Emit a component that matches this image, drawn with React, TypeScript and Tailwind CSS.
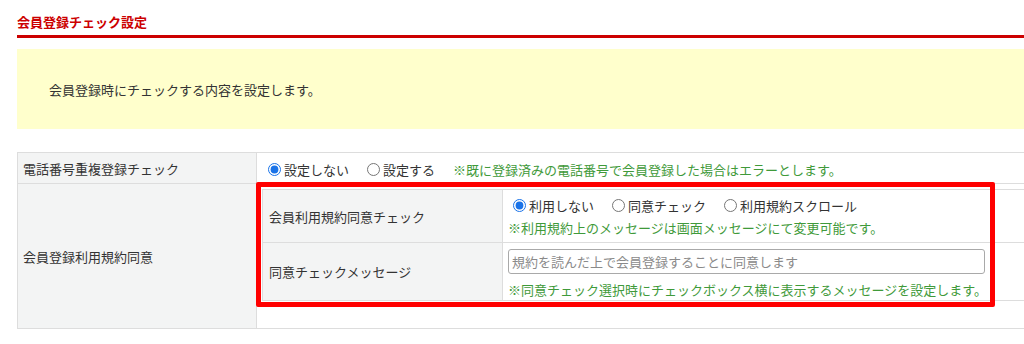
import React from 'react';

const Radio: React.FC<{ name: string; label: string; checked?: boolean }> = ({ name, label, checked }) => (
  <label className="flex items-center mr-[13px]">
    <input type="radio" name={name} defaultChecked={checked} className="ml-[5px] mr-[3px] w-[13px] h-[13px] accent-[#1a73e8]" />
    <span>{label}</span>
  </label>
);

const Note: React.FC<{ children: React.ReactNode }> = ({ children }) => (
  <p className="text-[#3f9a3a]">{children}</p>
);

export default function App() {
  return (
    <div className="w-[1024px] h-[344px] overflow-hidden bg-white text-[13px] leading-[19px] text-[#333] font-['Noto_Sans_CJK_JP',sans-serif]">
      <div className="relative w-[1120px] pl-[17px]">
        {/* Title */}
        <div className="pt-[12px] pb-[4px] border-b-[3px] border-[#cc0000]">
          <h2 className="font-bold text-[#cc0000]">会員登録チェック設定</h2>
        </div>

        {/* Description */}
        <div className="mt-[11px] h-[80px] bg-[#ffffcc] flex items-center pl-[32px]">
          <p>会員登録時にチェックする内容を設定します。</p>
        </div>

        {/* Settings table */}
        <div className="mt-[23px] border-t border-l border-[#dddddd]">
          <div className="flex h-[31px] border-b border-[#dddddd]">
            <div className="w-[239px] shrink-0 bg-[#f3f4f4] border-r border-[#dddddd] pl-[5px] flex items-center">
              電話番号重複登録チェック
            </div>
            <div className="flex-1 flex items-center pl-[6px] pt-[2px]">
              <Radio name="tel" label="設定しない" checked />
              <Radio name="tel" label="設定する" />
              <span className="ml-[5px] text-[#3f9a3a]">※既に登録済みの電話番号で会員登録した場合はエラーとします。</span>
            </div>
          </div>

          <div className="flex h-[145px] border-b border-[#dddddd]">
            <div className="w-[239px] shrink-0 bg-[#f3f4f4] border-r border-[#dddddd] pl-[5px] flex items-center">
              会員登録利用規約同意
            </div>
            <div className="flex-1 pt-[5px] pl-[5px]">
              <div className="border-t border-l border-[#dddddd]">
                <div className="flex h-[53px] border-b border-[#dddddd]">
                  <div className="w-[240px] shrink-0 bg-[#f3f4f4] border-r border-[#dddddd] pl-[6px] flex items-center">
                    会員利用規約同意チェック
                  </div>
                  <div className="flex-1 pl-[5px] pt-[6px]">
                    <div className="flex items-center mb-[3px]">
                      <Radio name="terms" label="利用しない" checked />
                      <Radio name="terms" label="同意チェック" />
                      <Radio name="terms" label="利用規約スクロール" />
                    </div>
                    <Note>※利用規約上のメッセージは画面メッセージにて変更可能です。</Note>
                  </div>
                </div>
                <div className="flex h-[58px] border-b border-[#dddddd]">
                  <div className="w-[240px] shrink-0 bg-[#f3f4f4] border-r border-[#dddddd] pl-[6px] flex items-center">
                    同意チェックメッセージ
                  </div>
                  <div className="flex-1 pl-[5px] pt-[6px]">
                    <input
                      type="text"
                      placeholder="規約を読んだ上で会員登録することに同意します"
                      className="block w-[477px] h-[25px] border border-[#a9a9a9] rounded-[3px] px-[3px] text-[13px] placeholder:text-[#8a8a8a] outline-none"
                    />
                    <p className="mt-[6px] text-[#3f9a3a]">※同意チェック選択時にチェックボックス横に表示するメッセージを設定します。</p>
                  </div>
                </div>
              </div>
            </div>
          </div>
        </div>

        {/* Highlight annotation */}
        <div className="absolute left-[256px] top-[182px] w-[739px] h-[125px] border-[5px] border-[#ff0000] rounded-[2px] pointer-events-none" />
      </div>
    </div>
  );
}
